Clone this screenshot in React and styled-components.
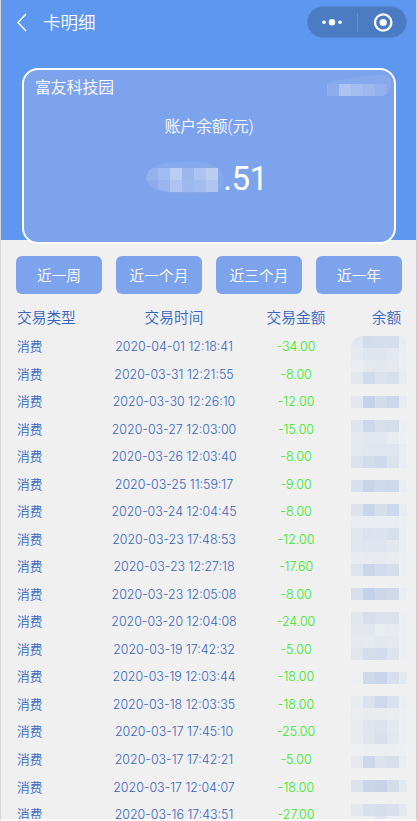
import React from 'react';
import styled, { createGlobalStyle } from 'styled-components';

const GlobalStyle = createGlobalStyle`
    body {
        margin: 0;
        background-color: #fff;
        font-family: Inter, "Noto Sans CJK SC", sans-serif;
        overflow: hidden;
    }
`
const Screen = styled.div`
    position: relative;
    height: 821px;
    box-sizing: border-box;
    border-left: 1px solid #d4d6d9;
    border-right: 1px solid #cbcdd0;
    border-bottom: 2px solid #fafafa;
    background-color: #f0f0f0;
    overflow: hidden;
`
const Banner = styled.div`
    height: 240px;
    background-color: #5d97f0;
`
const NavBar = styled.div`
    height: 68px;
    box-sizing: border-box;
    padding: 6px 9px 0 15px;
    display: flex;
    align-items: flex-start;
`
const BackIcon = styled.svg`
    margin-top: 7px;
    flex: none;
`
const NavTitle = styled.div`
    flex: 1;
    margin-left: 15px;
    font-size: 17.5px;
    line-height: 33px;
    color: #fff;
    font-weight: 350;
`
const Capsule = styled.div`
    width: 100px;
    height: 32px;
    box-sizing: border-box;
    border: 1px solid #5486cf;
    border-radius: 16px;
    background-color: #4a7bc3;
`
const Card = styled.div`
    width: 374px;
    height: 176px;
    margin-left: 21px;
    box-sizing: border-box;
    border: 2px solid #fff;
    border-radius: 16px;
    background-color: #7ea3ed;
    color: #fff;
    display: flex;
    flex-direction: column;
    align-items: center;
`
const CardTop = styled.div`
    width: 100%;
    height: 44px;
    box-sizing: border-box;
    padding: 5px 2px 0 11px;
    display: flex;
    justify-content: space-between;
    font-size: 15.8px;
    line-height: 26px;
    font-weight: 350;
`
const CardLabel = styled.div`
    font-size: 15.8px;
    line-height: 26px;
    font-weight: 350;
    font-family: Roboto, "Noto Sans CJK SC", sans-serif;
`
const Amount = styled.div`
    margin-top: 19px;
    padding-right: 4px;
    display: flex;
    align-items: center;
    font-family: Roboto, sans-serif;
    font-size: 33px;
    line-height: 40px;
    height: 40px;
    letter-spacing: -0.5px;

    svg {
        margin-right: -2px;
    }
`
const Filters = styled.div`
    padding: 16px 14px 0 15px;
    display: grid;
    grid-template-columns: repeat(4, 86px);
    justify-content: space-between;
`
const FilterButton = styled.button`
    height: 38px;
    padding: 0 0 2px;
    border: 0;
    border-radius: 6px;
    background-color: #7ea3ed;
    color: #fff;
    font-family: inherit;
    font-size: 14.7px;
    font-weight: 350;
`
const Table = styled.div`
    position: relative;
    margin-top: 10px;
`
const Row = styled.div`
    height: ${props => props.$head ? "29px" : "27.53px"};
    display: grid;
    grid-template-columns: 77px 160px 84px 97px;
    padding-left: 16px;
    align-items: center;
    font-size: 12.4px;
    font-weight: 350;
    color: #3565bf;
`
const Cell = styled.div`
    text-align: center;
    color: ${props => props.$green ? "#2fe813" : "inherit"};
    white-space: nowrap;
`
const HeadCell = styled(Cell)`
    text-align: ${props => props.$left ? "left" : "center"};
    padding-bottom: 5px;
    font-size: 14.7px;
`
const TypeCell = styled(Cell)`
    text-align: left;
    padding-bottom: 2px;
    font-size: 12.7px;
`
const Mosaic = styled.div`
    position: absolute;
    left: 350px;
    top: 32px;
    display: grid;
    grid-template-columns: repeat(4, 12px) 8px;
    grid-auto-rows: 12px;
    border-radius: 12px 8px 8px 8px;
    overflow: hidden;
`
const Tile = styled.div`
    background-color: ${props => props.$color};
`
const EdgeMark = styled.div`
    position: absolute;
    left: -1px;
    top: ${props => props.$top}px;
    width: 1px;
    height: 1px;
    background-color: #2b86d9;
`

const periods = ["近一周", "近一个月", "近三个月", "近一年"];

const records = [
    ["2020-04-01 12:18:41", "-34.00"],
    ["2020-03-31 12:21:55", "-8.00"],
    ["2020-03-30 12:26:10", "-12.00"],
    ["2020-03-27 12:03:00", "-15.00"],
    ["2020-03-26 12:03:40", "-8.00"],
    ["2020-03-25 11:59:17", "-9.00"],
    ["2020-03-24 12:04:45", "-8.00"],
    ["2020-03-23 17:48:53", "-12.00"],
    ["2020-03-23 12:27:18", "-17.60"],
    ["2020-03-23 12:05:08", "-8.00"],
    ["2020-03-20 12:04:08", "-24.00"],
    ["2020-03-19 17:42:32", "-5.00"],
    ["2020-03-19 12:03:44", "-18.00"],
    ["2020-03-18 12:03:35", "-18.00"],
    ["2020-03-17 17:45:10", "-25.00"],
    ["2020-03-17 17:42:21", "-5.00"],
    ["2020-03-17 12:04:07", "-18.00"],
    ["2020-03-16 17:43:51", "-27.00"],
];

// one line per 12px strip of the hidden balances, empty string is a gap
const mosaic = [
    "e2e7ef d2dcec d5dded d5dded e9ecf0",
    "e6eaf0 dfe5ef dfe5ef e3e7ef ebedf0",
    "e9ecf0 e5e9ef e3e8ef e5e9ef ebedf0",
    "e3e8ef d1dbec dbe2ed d8dfec e8ebf0",
    "",
    "e2e8ef c5d2ea d3dced cdd7ec e8ebf0",
    "",
    "dfe5ee cdd8ea d7dfec d5ddea ebedf0",
    "e5e9ef e3e7ef e3e7ef e8ebf0 eeeff0",
    "e4e9f0 e1e6ef e0e5ef e0e5ef e9ecf0",
    "dce2ec d3dceb ced9ec dbe2ed e9ecf0",
    "",
    "d6e0ef c8d5e9 cedaed cdd8ec eaedf0",
    "",
    "dde3ed c9d6ea d5deeb ccd8eb e8ebf0",
    "e9ecf0 e9ecf0 e9ecf0 e9ecf0 edeef0",
    "e2e6ef dbe1ed dce2ee d7dfec eaedf0",
    "e2e6ef dfe4ee dfe4ee e3e7ee eaedf0",
    "e8ebf0 e8eaef e8eaef e9ebef edeef0",
    "dee4ed cbd7e9 d1dbec d6deeb eceef0",
    "",
    "d7dfea c4d1ea cbd6e9 cfd9e9 eaedf0",
    "",
    "e2e6ed d8dfeb dce2ec dce2ec ebedf0",
    "e4e8ee e3e7ef e9ecf0 e7eaf0 ebedf0",
    "e5e9ef e6eaee e3e7ee e5e9ef ebedf0",
    "e0e6ec d4deeb d2dcec dde4ec ebedf0",
    "",
    "edeff0 cdd8ea c9d5ea d7dfec e4e8ef",
    "",
    "e8ebf0 dbe2ed cfd9eb dae1ee ebedf0",
    "eaecef e9ebef e9ebef eaecef edeef0",
    "e8ebf0 dfe4ee dde3ec e4e8ef ebedf0",
    "e8ebf0 e1e6ee d9e0ec e3e7ef ebedf0",
    "eeeff0 edeef0 edeef0 edeef0 eeeff0",
    "e5e9ef cdd7e9 dce2ed d8dfeb e9ecf0",
    "",
    "dbe2ec cbd5e9 c8d3e7 d4ddea e4e8ef",
    "",
    "e3e8ef d8e0ec d6deec dae1ec e5e9ef",
    "eeeff0 eceef0 e2e7ef eceef0 eeeff0",
];
const blank = "f0f0f0 f0f0f0 f0f0f0 f0f0f0 f0f0f0";

const HiddenName = () =>
    <svg width="65" height="26" viewBox="0 0 65 26">
        <path d="M0 9Q4 5 20 4L48 0H58Q65 2 64 11Q63 17 56 21H0Z" fill="#86a9ed" />
        <path d="M0 9H12V21H0Z" fill="#8dacea" />
        <path d="M12 9H24V21H12Z" fill="#adc3f0" />
        <path d="M24 9H36V21H24Z" fill="#a5bdee" />
        <path d="M36 9H48V21H36Z" fill="#9eb8ee" />
        <path d="M48 9H60V18L56 21H48Z" fill="#94b1ed" />
    </svg>

const HiddenAmount = () =>
    <svg width="79" height="34" viewBox="0 0 79 34">
        <path d="M6 6Q14 0 35 0H56Q68 1 74 8Q80 16 76 25Q68 32 40 32Q10 32 3 23Q-3 13 6 6Z" fill="#86a8ec" />
        <path d="M6 6H12V18H0Q0 10 6 6Z" fill="#94b2ed" />
        <path d="M0 18H12V27Q3 25 0 18Z" fill="#8dadec" />
        <path d="M12 6H24V18H12Z" fill="#a1baef" />
        <path d="M12 18H24V30Q16 29 12 27Z" fill="#99b4ee" />
        <path d="M24 6H36V18H24Z" fill="#bacdf4" />
        <path d="M24 18H36V30H24Z" fill="#afc4f2" />
        <path d="M36 6H48V18H36Z" fill="#9ab7ed" />
        <path d="M36 18H48V30H36Z" fill="#9db9ee" />
        <path d="M48 6H60V18H48Z" fill="#adc4f1" />
        <path d="M48 18H60V30H48Z" fill="#a4bdf0" />
        <path d="M60 6H72V18H60Z" fill="#bacdf3" />
        <path d="M60 18H72V30H60Z" fill="#b0c6f1" />
    </svg>

const App = () => {
    return (
        <>
            <GlobalStyle />
            <Screen>
                <Banner>
                    <NavBar>
                        <BackIcon width="12" height="20" viewBox="0 0 12 20" fill="none" stroke="#fff" strokeWidth="1.4">
                            <path d="M10 1L2 9.5L10 18" />
                        </BackIcon>
                        <NavTitle>卡明细</NavTitle>
                        <Capsule>
                            <svg width="98" height="30" viewBox="0 0 98 30" fill="#fff">
                                <circle cx="16" cy="15.2" r="1.8" />
                                <circle cx="24" cy="15.2" r="3.2" />
                                <circle cx="32" cy="15.2" r="1.8" />
                                <path d="M49.5 6V25" stroke="#658fcc" />
                                <circle cx="75.2" cy="15.5" r="8.2" fill="none" stroke="#fff" strokeWidth="2.3" />
                                <circle cx="75.2" cy="15.5" r="3.6" />
                            </svg>
                        </Capsule>
                    </NavBar>
                    <Card>
                        <CardTop>
                            富友科技园
                            <HiddenName />
                        </CardTop>
                        <CardLabel>账户余额(元)</CardLabel>
                        <Amount>
                            <HiddenAmount />
                            .51
                        </Amount>
                    </Card>
                </Banner>
                <Filters>
                    {periods.map(period => <FilterButton key={period}>{period}</FilterButton>)}
                </Filters>
                <Table>
                    <Row $head>
                        <HeadCell $left>交易类型</HeadCell>
                        <HeadCell>交易时间</HeadCell>
                        <HeadCell>交易金额</HeadCell>
                        <HeadCell>余额</HeadCell>
                    </Row>
                    {records.map(([time, amount]) =>
                        <Row key={time}>
                            <TypeCell>消费</TypeCell>
                            <Cell>{time}</Cell>
                            <Cell $green>{amount}</Cell>
                        </Row>
                    )}
                    <Mosaic>
                        {mosaic.map((line, y) =>
                            (line || blank).split(" ").map((color, x) => <Tile key={y + "-" + x} $color={"#" + color} />)
                        )}
                    </Mosaic>
                </Table>
                <EdgeMark $top={738} />
                <EdgeMark $top={763} />
            </Screen>
        </>
    );
}
export default App;
